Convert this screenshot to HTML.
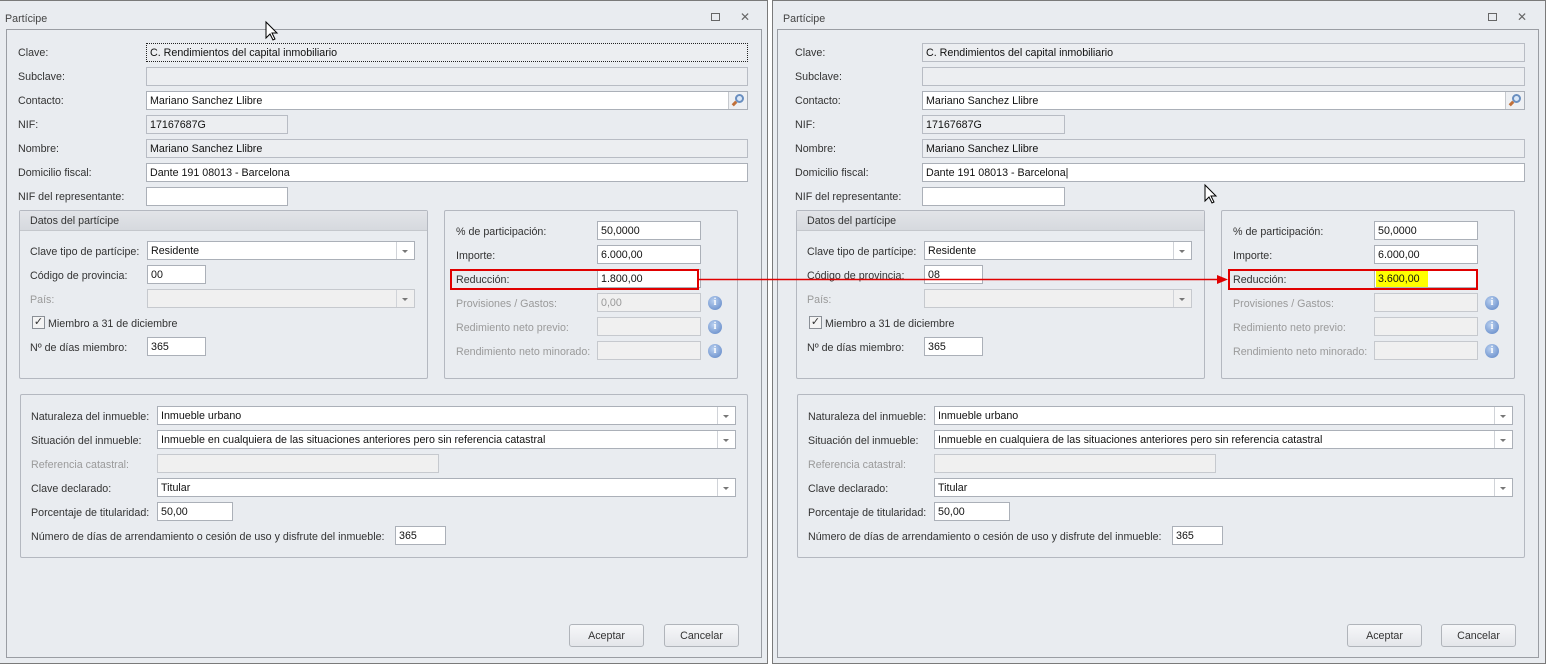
<!DOCTYPE html>
<html><head><meta charset="utf-8">
<style>
*{box-sizing:border-box;margin:0;padding:0}
body{width:1546px;height:666px;background:#fff;position:relative;overflow:hidden;font-family:"Liberation Sans",sans-serif;font-size:10.7px;color:#333}
.win{position:absolute;top:0;height:664px;background:#e9ecf0;border:1px solid #7a7a7a;overflow:hidden}
.w{position:absolute;top:0;left:0;width:780px;height:666px}
.a{position:absolute}
.t{position:absolute;font-size:10.7px;line-height:14px;white-space:nowrap;color:#333;margin-top:1px}
.dis{color:#9a9a9a}
.in{position:absolute;height:19px;background:#fff;border:1px solid #abb0b8;padding:3px 0 0 3px;font-size:10.7px;line-height:12px;white-space:nowrap;overflow:hidden;color:#111}
.ro{background:#eceef1;border-color:#b8bcc4}
.dd{background:#f0f0f0;border-color:#c6c9ce}
.cb:after{content:"";position:absolute;right:0;top:0;width:17px;height:17px;border-left:1px solid #d0d3d8}
.cb:before{content:"";position:absolute;right:6px;top:8px;border:3px solid transparent;border-top:3px solid #777;border-bottom:0}
.grp{position:absolute;border:1px solid #b4b8c0;border-radius:2px}
.info{position:absolute;width:14px;height:14px;border-radius:50%;background:radial-gradient(circle at 40% 35%,#b9d0f0,#5b83c4);color:#fff;font:bold 10px "Liberation Serif",serif;text-align:center;line-height:14px}
.btn{position:absolute;width:75px;height:23px;border:1px solid #b0b4ba;border-radius:3px;background:linear-gradient(#f6f7f9,#e4e6ea);text-align:center;line-height:22px;font-size:10.7px;color:#333}
.red{position:absolute;border:2px solid #e00000}
</style></head><body>

<!-- LEFT WINDOW -->
<div class="win" style="left:-5px;width:773px"></div>
<div class="w" style="left:0">
<div class="t" style="left:5px;top:11px;color:#444">Partícipe</div>
<div class="a" style="left:711px;top:13px;width:9px;height:8px;border:1px solid #666"></div>
<div class="t" style="left:740px;top:9px;font-size:12px;color:#666">✕</div>
<div class="a" style="left:6px;top:29px;width:756px;height:629px;border:1px solid #9a9da3"></div>

<div class="t" style="left:18px;top:45px">Clave:</div>
<div class="in ro" style="left:146px;top:43px;width:602px;border:1px dotted #222">C. Rendimientos del capital inmobiliario</div>
<div class="t" style="left:18px;top:69px">Subclave:</div>
<div class="in ro" style="left:146px;top:67px;width:602px"></div>
<div class="t" style="left:18px;top:93px">Contacto:</div>
<div class="in" style="left:146px;top:91px;width:602px">Mariano Sanchez Llibre</div>
<div class="a" style="left:728px;top:92px;width:19px;height:17px;border-left:1px solid #c6c9ce;background:#eef0f3"><div class="a" style="left:6px;top:2px;width:9px;height:9px;border:2px solid #6a8fc0;border-radius:50%;background:#dbe8f8"></div><div class="a" style="left:3px;top:10px;width:5px;height:3px;background:#c0703a;transform:rotate(-45deg)"></div></div>
<div class="t" style="left:18px;top:117px">NIF:</div>
<div class="in ro" style="left:146px;top:115px;width:142px">17167687G</div>
<div class="t" style="left:18px;top:141px">Nombre:</div>
<div class="in ro" style="left:146px;top:139px;width:602px">Mariano Sanchez Llibre</div>
<div class="t" style="left:18px;top:165px">Domicilio fiscal:</div>
<div class="in" style="left:146px;top:163px;width:602px">Dante 191 08013 - Barcelona</div>
<div class="t" style="left:18px;top:189px">NIF del representante:</div>
<div class="in" style="left:146px;top:187px;width:142px"></div>

<div class="grp" style="left:19px;top:210px;width:409px;height:169px"><div class="a" style="left:0;top:0;width:407px;height:20px;background:linear-gradient(#e2e4e8,#d6d9de);border-bottom:1px solid #c4c7cc"></div></div>
<div class="t" style="left:30px;top:213px">Datos del partícipe</div>
<div class="t" style="left:30px;top:244px">Clave tipo de partícipe:</div>
<div class="in cb" style="left:147px;top:241px;width:268px">Residente</div>
<div class="t" style="left:30px;top:268px">Código de provincia:</div>
<div class="in" style="left:147px;top:265px;width:59px">00</div>
<div class="t dis" style="left:30px;top:292px">País:</div>
<div class="in dd cb" style="left:147px;top:289px;width:268px"></div>
<div class="a" style="left:32px;top:316px;width:13px;height:13px;border:1px solid #8a8f96;background:#f4f4f4;font-size:11px;line-height:11px;text-align:center;color:#333">✓</div>
<div class="t" style="left:48px;top:316px">Miembro a 31 de diciembre</div>
<div class="t" style="left:30px;top:340px">Nº de días miembro:</div>
<div class="in" style="left:147px;top:337px;width:59px">365</div>

<div class="grp" style="left:444px;top:210px;width:294px;height:169px"></div>
<div class="t" style="left:456px;top:224px">% de participación:</div>
<div class="in" style="left:597px;top:221px;width:104px">50,0000</div>
<div class="t" style="left:456px;top:248px">Importe:</div>
<div class="in" style="left:597px;top:245px;width:104px">6.000,00</div>
<div class="t" style="left:456px;top:272px">Reducción:</div>
<div class="in" style="left:597px;top:269px;width:104px">1.800,00</div>
<div class="red" style="left:450px;top:269px;width:249px;height:21px"></div>
<div class="t dis" style="left:456px;top:296px">Provisiones / Gastos:</div>
<div class="in dd" style="left:597px;top:293px;width:104px;color:#999">0,00</div>
<div class="t dis" style="left:456px;top:320px">Redimiento neto previo:</div>
<div class="in dd" style="left:597px;top:317px;width:104px"></div>
<div class="t dis" style="left:456px;top:344px">Rendimiento neto minorado:</div>
<div class="in dd" style="left:597px;top:341px;width:104px"></div>
<div class="info" style="left:708px;top:296px">i</div>
<div class="info" style="left:708px;top:320px">i</div>
<div class="info" style="left:708px;top:344px">i</div>

<div class="grp" style="left:20px;top:394px;width:728px;height:164px"></div>
<div class="t" style="left:31px;top:409px">Naturaleza del inmueble:</div>
<div class="in cb" style="left:157px;top:406px;width:579px">Inmueble urbano</div>
<div class="t" style="left:31px;top:433px">Situación del inmueble:</div>
<div class="in cb" style="left:157px;top:430px;width:579px">Inmueble en cualquiera de las situaciones anteriores pero sin referencia catastral</div>
<div class="t dis" style="left:31px;top:457px">Referencia catastral:</div>
<div class="in dd" style="left:157px;top:454px;width:282px"></div>
<div class="t" style="left:31px;top:481px">Clave declarado:</div>
<div class="in cb" style="left:157px;top:478px;width:579px">Titular</div>
<div class="t" style="left:31px;top:505px">Porcentaje de titularidad:</div>
<div class="in" style="left:157px;top:502px;width:76px">50,00</div>
<div class="t" style="left:31px;top:529px">Número de días de arrendamiento o cesión de uso y disfrute del inmueble:</div>
<div class="in" style="left:395px;top:526px;width:51px">365</div>

<div class="btn" style="left:569px;top:624px">Aceptar</div>
<div class="btn" style="left:664px;top:624px">Cancelar</div>
</div>

<!-- RIGHT WINDOW -->
<div class="win" style="left:772px;width:774px"></div>
<div class="w" style="left:777px">
<div class="t" style="left:6px;top:11px;color:#444">Partícipe</div>
<div class="a" style="left:711px;top:13px;width:9px;height:8px;border:1px solid #666"></div>
<div class="t" style="left:740px;top:9px;font-size:12px;color:#666">✕</div>
<div class="a" style="left:0px;top:29px;width:762px;height:629px;border:1px solid #9a9da3"></div>

<div class="t" style="left:18px;top:45px">Clave:</div>
<div class="in ro" style="left:145px;top:43px;width:603px">C. Rendimientos del capital inmobiliario</div>
<div class="t" style="left:18px;top:69px">Subclave:</div>
<div class="in ro" style="left:145px;top:67px;width:603px"></div>
<div class="t" style="left:18px;top:93px">Contacto:</div>
<div class="in" style="left:145px;top:91px;width:603px">Mariano Sanchez Llibre</div>
<div class="a" style="left:728px;top:92px;width:19px;height:17px;border-left:1px solid #c6c9ce;background:#eef0f3"><div class="a" style="left:6px;top:2px;width:9px;height:9px;border:2px solid #6a8fc0;border-radius:50%;background:#dbe8f8"></div><div class="a" style="left:3px;top:10px;width:5px;height:3px;background:#c0703a;transform:rotate(-45deg)"></div></div>
<div class="t" style="left:18px;top:117px">NIF:</div>
<div class="in ro" style="left:145px;top:115px;width:143px">17167687G</div>
<div class="t" style="left:18px;top:141px">Nombre:</div>
<div class="in ro" style="left:145px;top:139px;width:603px">Mariano Sanchez Llibre</div>
<div class="t" style="left:18px;top:165px">Domicilio fiscal:</div>
<div class="in" style="left:145px;top:163px;width:603px">Dante 191 08013 - Barcelona|</div>
<div class="t" style="left:18px;top:189px">NIF del representante:</div>
<div class="in" style="left:145px;top:187px;width:143px"></div>

<div class="grp" style="left:19px;top:210px;width:409px;height:169px"><div class="a" style="left:0;top:0;width:407px;height:20px;background:linear-gradient(#e2e4e8,#d6d9de);border-bottom:1px solid #c4c7cc"></div></div>
<div class="t" style="left:30px;top:213px">Datos del partícipe</div>
<div class="t" style="left:30px;top:244px">Clave tipo de partícipe:</div>
<div class="in cb" style="left:147px;top:241px;width:268px">Residente</div>
<div class="t" style="left:30px;top:268px">Código de provincia:</div>
<div class="in" style="left:147px;top:265px;width:59px">08</div>
<div class="t dis" style="left:30px;top:292px">País:</div>
<div class="in dd cb" style="left:147px;top:289px;width:268px"></div>
<div class="a" style="left:32px;top:316px;width:13px;height:13px;border:1px solid #8a8f96;background:#f4f4f4;font-size:11px;line-height:11px;text-align:center;color:#333">✓</div>
<div class="t" style="left:48px;top:316px">Miembro a 31 de diciembre</div>
<div class="t" style="left:30px;top:340px">Nº de días miembro:</div>
<div class="in" style="left:147px;top:337px;width:59px">365</div>

<div class="grp" style="left:444px;top:210px;width:294px;height:169px"></div>
<div class="t" style="left:456px;top:224px">% de participación:</div>
<div class="in" style="left:597px;top:221px;width:104px">50,0000</div>
<div class="t" style="left:456px;top:248px">Importe:</div>
<div class="in" style="left:597px;top:245px;width:104px">6.000,00</div>
<div class="t" style="left:456px;top:272px">Reducción:</div>
<div class="in" style="left:597px;top:269px;width:104px;padding-left:1px;padding-top:1px"><span style="display:inline-block;background:#ffff00;padding:2px 8px 3px 2px">3.600,00</span></div>
<div class="red" style="left:451px;top:269px;width:250px;height:21px"></div>
<div class="t dis" style="left:456px;top:296px">Provisiones / Gastos:</div>
<div class="in dd" style="left:597px;top:293px;width:104px"></div>
<div class="t dis" style="left:456px;top:320px">Redimiento neto previo:</div>
<div class="in dd" style="left:597px;top:317px;width:104px"></div>
<div class="t dis" style="left:456px;top:344px">Rendimiento neto minorado:</div>
<div class="in dd" style="left:597px;top:341px;width:104px"></div>
<div class="info" style="left:708px;top:296px">i</div>
<div class="info" style="left:708px;top:320px">i</div>
<div class="info" style="left:708px;top:344px">i</div>

<div class="grp" style="left:20px;top:394px;width:728px;height:164px"></div>
<div class="t" style="left:31px;top:409px">Naturaleza del inmueble:</div>
<div class="in cb" style="left:157px;top:406px;width:579px">Inmueble urbano</div>
<div class="t" style="left:31px;top:433px">Situación del inmueble:</div>
<div class="in cb" style="left:157px;top:430px;width:579px">Inmueble en cualquiera de las situaciones anteriores pero sin referencia catastral</div>
<div class="t dis" style="left:31px;top:457px">Referencia catastral:</div>
<div class="in dd" style="left:157px;top:454px;width:282px"></div>
<div class="t" style="left:31px;top:481px">Clave declarado:</div>
<div class="in cb" style="left:157px;top:478px;width:579px">Titular</div>
<div class="t" style="left:31px;top:505px">Porcentaje de titularidad:</div>
<div class="in" style="left:157px;top:502px;width:76px">50,00</div>
<div class="t" style="left:31px;top:529px">Número de días de arrendamiento o cesión de uso y disfrute del inmueble:</div>
<div class="in" style="left:395px;top:526px;width:51px">365</div>

<div class="btn" style="left:570px;top:624px">Aceptar</div>
<div class="btn" style="left:664px;top:624px">Cancelar</div>
</div>

<!-- arrow -->
<svg class="a" style="left:0;top:0" width="1546" height="666">
<line x1="699" y1="279.5" x2="1220" y2="279.5" stroke="#e00000" stroke-width="1.5"/>
<polygon points="1228,279.5 1217,275 1217,284" fill="#e00000"/>
<path d="M266 22 L266 38 L270 34 L273 40 L275 39 L272 33 L277 33 Z" fill="#fff" stroke="#000" stroke-width="1"/>
<path d="M1205 185 L1205 201 L1209 197 L1212 203 L1214 202 L1211 196 L1216 196 Z" fill="#fff" stroke="#000" stroke-width="1"/>
</svg>
</body></html>
